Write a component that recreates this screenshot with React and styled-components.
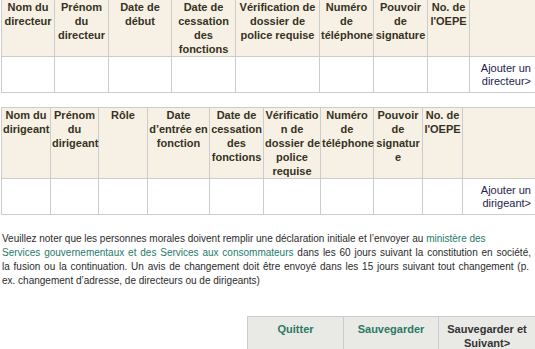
import React from "react";
import styled, { createGlobalStyle } from "styled-components";

const GlobalStyle = createGlobalStyle`
  html, body {
    margin: 0;
    padding: 0;
    background: #ffffff;
    overflow: hidden;
  }
  body {
    font-family: "Liberation Sans", Arial, sans-serif;
    color: #333333;
  }
`;

const Page = styled.div`
  width: 535px;
  padding-left: 1px;
  overflow: hidden;
`;

const Table = styled.table`
  border-collapse: collapse;
  table-layout: fixed;
  width: 535px;
  margin: ${(p) => (p.$first ? "-1px 0 14px" : "0")};
`;

const HeadCell = styled.th`
  background: #f6f1e4;
  border: 1px solid #cccccc;
  color: #36321f;
  font-size: 11px;
  font-weight: bold;
  line-height: 14px;
  text-align: center;
  vertical-align: top;
  padding: 0 1px;
  white-space: nowrap;
`;

const Cell = styled.td`
  border: 1px solid #cccccc;
  height: 35px;
  padding: 0 5px 0 2px;
  font-size: 11px;
  line-height: 13px;
  color: #23234a;
  text-align: right;
  vertical-align: middle;
`;

const Note = styled.div`
  margin: 17px 0 0 1px;
  font-size: 10px;
  line-height: 14px;
  color: #2b2b2b;
  white-space: nowrap;
`;

const NoteLine = styled.span`
  display: block;
  width: ${(p) => p.$width || "auto"};
  text-align: ${(p) => (p.$width ? "justify" : "left")};
  text-align-last: ${(p) => (p.$width ? "justify" : "auto")};
  white-space: normal;
`;

const Link = styled.span`
  color: #1d7a6a;
`;

const ButtonBar = styled.div`
  display: grid;
  grid-template-columns: 96px 95px 97px;
  margin: 28px 0 0 246px;
  background: #e9e9e5;
  border-top: 1px solid #cccccc;
  border-left: 1px solid #cccccc;
  height: 40px;
`;

const ActionButton = styled.button`
  border: none;
  border-right: 1px solid #cccccc;
  background: transparent;
  font-family: "Liberation Sans", Arial, sans-serif;
  font-size: 11px;
  font-weight: bold;
  line-height: 14px;
  color: ${(p) => (p.$primary ? "#333333" : "#2a7a64")};
  text-align: center;
  align-self: stretch;
  display: flex;
  justify-content: center;
  align-items: flex-start;
  padding: 5px 2px 0;
`;

const directorCols = [53, 54, 63, 64, 84, 54, 54, 42, 67];
const directorHeads = [
  ["Nom du", "directeur"],
  ["Prénom", "du", "directeur"],
  ["Date de", "début"],
  ["Date de", "cessation", "des", "fonctions"],
  ["Vérification de", "dossier de", "police requise"],
  ["Numéro", "de", "téléphone"],
  ["Pouvoir", "de", "signature"],
  ["No. de", "l'OEPE"],
  [],
];

const officerCols = [49, 48, 49, 62, 54, 57, 53, 49, 40, 74];
const officerHeads = [
  ["Nom du", "dirigeant"],
  ["Prénom", "du", "dirigeant"],
  ["Rôle"],
  ["Date", "d’entrée en", "fonction"],
  ["Date de", "cessation", "des", "fonctions"],
  ["Vérificatio", "n de", "dossier de", "police", "requise"],
  ["Numéro", "de", "téléphone"],
  ["Pouvoir", "de", "signatur", "e"],
  ["No. de", "l'OEPE"],
  [],
];

const Lines = ({ lines }) =>
  lines.map((line, i) => (
    <React.Fragment key={i}>
      {i > 0 && <br />}
      {line}
    </React.Fragment>
  ));

const EntryTable = ({ cols, heads, addLabel, first }) => (
  <Table $first={first}>
    <colgroup>
      {cols.map((w, i) => (
        <col key={i} style={{ width: w }} />
      ))}
    </colgroup>
    <thead>
      <tr>
        {heads.map((h, i) => (
          <HeadCell key={i}>
            <Lines lines={h} />
          </HeadCell>
        ))}
      </tr>
    </thead>
    <tbody>
      <tr>
        {cols.map((_, i) => (
          <Cell key={i}>
            {i === cols.length - 1 && <Lines lines={["Ajouter un", addLabel]} />}
          </Cell>
        ))}
      </tr>
    </tbody>
  </Table>
);

const App = () => (
  <Page>
    <GlobalStyle />
    <EntryTable cols={directorCols} heads={directorHeads} addLabel="directeur>" first />
    <EntryTable cols={officerCols} heads={officerHeads} addLabel="dirigeant>" />

    <Note>
      <NoteLine>
        Veuillez noter que les personnes morales doivent remplir une déclaration initiale et l’envoyer au{" "}
        <Link>ministère des</Link>
      </NoteLine>
      <NoteLine $width="529px">
        <Link>Services gouvernementaux et des Services aux consommateurs</Link> dans les 60 jours suivant la
        constitution en société,
      </NoteLine>
      <NoteLine $width="527px">
        la fusion ou la continuation. Un avis de changement doit être envoyé dans les 15 jours suivant tout
        changement (p.
      </NoteLine>
      <NoteLine>ex. changement d’adresse, de directeurs ou de dirigeants)</NoteLine>
    </Note>

    <ButtonBar>
      <ActionButton>Quitter</ActionButton>
      <ActionButton>Sauvegarder</ActionButton>
      <ActionButton $primary>
        Sauvegarder et
        <br />
        Suivant&gt;
      </ActionButton>
    </ButtonBar>
  </Page>
);

export default App;
